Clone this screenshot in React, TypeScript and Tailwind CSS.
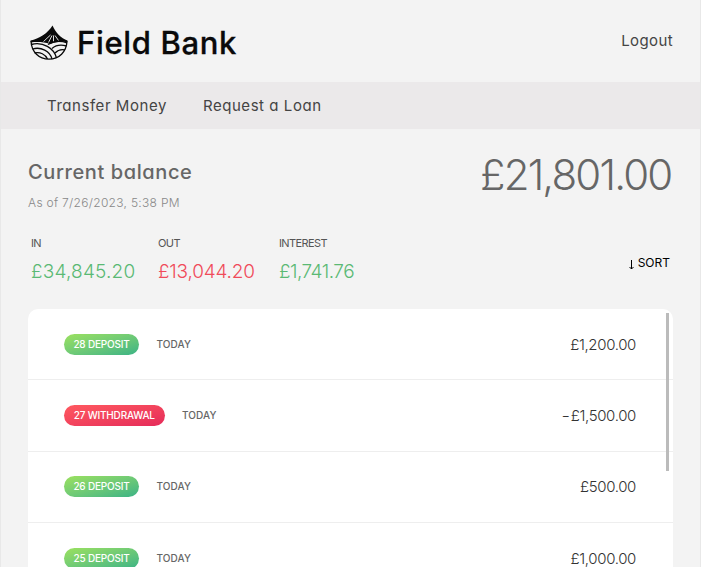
import React from "react";

type Movement = { id: number; kind: "deposit" | "withdrawal"; amount: string };

const movements: Movement[] = [
  { id: 28, kind: "deposit", amount: "£1,200.00" },
  { id: 27, kind: "withdrawal", amount: "-£1,500.00" },
  { id: 26, kind: "deposit", amount: "£500.00" },
  { id: 25, kind: "deposit", amount: "£1,000.00" },
];

function Logo() {
  return (
    <svg className="h-[36px] w-[38px] shrink-0" viewBox="0 0 38 36" fill="none" stroke="#0a0a0a">
      <path d="M0.5 15.500C9 14 18 8 22.500 0.500C26 8 31 13.500 37.500 15.500L37 17.500C31 15.500 26 17 20 19C14 17 7 16.500 1 17.500Z" fill="#0a0a0a" stroke="none" />
      <path d="M20.500 10L13.500 16.500M22 10.500L18.500 17.500M23.500 10.500L23.500 16.500M25 10.500L28.500 15.500" stroke="#f3f3f3" strokeWidth="0.9" />
      <path d="M1 16C1.500 27 9 34.200 19 34.200S36.500 27 37 16" strokeWidth="1.300" />
      <path d="M1.200 19.500C13 16.500 24 23 26.500 33M2.500 24C11 21.500 20 26 22 34M4.500 28C10 26.500 15.500 29.500 17.500 34" strokeWidth="1.300" />
      <path d="M18 19.500C23 16.500 30 15.500 37 17.800M22 23.500C26 20 31 19.500 36.500 21M25 28C28 25 31 24 35 25" strokeWidth="1.300" />
    </svg>
  );
}

function Total({ label, value, className, valueClass }: { label: string; value: string; className: string; valueClass: string }) {
  return (
    <div className={className}>
      <div className="text-[11px] leading-[14px] tracking-[-0.6px] text-[#555]">{label}</div>
      <div className={`mt-[12px] text-[19px] font-light leading-[20px] ${valueClass}`}>{value}</div>
    </div>
  );
}

function Row({ movement }: { movement: Movement }) {
  const deposit = movement.kind === "deposit";
  const negative = movement.amount.startsWith("-");
  return (
    <li className="flex h-[71.3px] shrink-0 items-center border-b border-[#eee] pl-9 pr-[37px]">
      <span
        className={`flex h-[21px] items-center justify-center rounded-full text-[10px] font-medium tracking-[-0.2px] text-white ${
          deposit ? "w-[75px] bg-linear-to-br from-[#9be15d] to-[#39b385]" : "w-[100.5px] bg-linear-to-br from-[#ff585f] to-[#e52a5a]"
        }`}
      >
        {movement.id} {deposit ? "DEPOSIT" : "WITHDRAWAL"}
      </span>
      <span className="ml-[17.5px] text-[10px] font-medium tracking-[0.1px] text-[#666]">TODAY</span>
      <span className="ml-auto pt-[2px] text-[15px] font-light tracking-[-0.35px] text-[#333]">
        {negative && <span className="mr-px inline-block origin-right scale-x-125">-</span>}
        {negative ? movement.amount.slice(1) : movement.amount}
      </span>
    </li>
  );
}

export default function App() {
  return (
    <div className="flex h-[567px] w-[701px] flex-col overflow-hidden border-x border-[#e8e8e8] bg-[#f3f3f3] font-['Inter',sans-serif] [font-feature-settings:'cv11']">
      <header className="flex h-[82px] shrink-0 items-center justify-between pl-[29px] pr-[27px]">
        <div className="flex items-center gap-[9px] pt-[4px]">
          <Logo />
          <span className="text-[31px] font-medium leading-[36px] tracking-[0.65px] text-[#0a0a0a] [-webkit-text-stroke:0.3px_#0a0a0a] [font-feature-settings:normal]">Field Bank</span>
        </div>
        <a className="pt-px text-[15px] tracking-[0.4px] text-[#444]">Logout</a>
      </header>
      <nav className="flex h-[47px] shrink-0 items-center gap-[36px] bg-[#ebe9ea] pl-[46px] pt-[2px] text-[15px] tracking-[0.55px] text-[#444]">
        <a>Transfer Money</a>
        <a>Request a Loan</a>
      </nav>
      <main className="flex min-h-0 flex-1 flex-col px-[27px]">
        <section className="flex justify-between pt-[29px]">
          <div>
            <h1 className="text-[20px] font-medium leading-[28px] tracking-[0.6px] text-[#666]">Current balance</h1>
            <p className="mt-[8px] text-[12px] font-light leading-[18px] tracking-[0.3px] text-[#888]">As of 7/26/2023, 5:38 PM</p>
          </div>
          <div className="-mt-[7px] mr-[1.5px] h-[48px] text-[42px] font-light leading-[48px] tracking-[-1.8px] text-[#666]">£21,801.00</div>
        </section>
        <section className="mt-[24px] flex h-[46px] shrink-0 pl-[3px]">
          <Total label="IN" value="£34,845.20" className="w-[127px]" valueClass="tracking-[0.2px] text-[#5ab974]" />
          <Total label="OUT" value="£13,044.20" className="w-[121px]" valueClass="tracking-[-0.2px] text-[#f04b5a]" />
          <Total label="INTEREST" value="£1,741.76" className="w-[80px]" valueClass="tracking-[-0.5px] text-[#5ab974]" />
          <button className="ml-auto mt-[18px] flex h-[18px] items-center gap-1 pr-[3px] text-[12px] text-black">
            <svg className="mt-[3px] h-[10px] w-[5px]" viewBox="0 0 5 10" fill="none" stroke="currentColor">
              <path d="M2.500 0V9M0.500 7L2.500 9L4.500 7" />
            </svg>
            SORT
          </button>
        </section>
        <section className="mt-[27px] flex min-h-0 flex-1 overflow-hidden rounded-t-[10px] bg-white">
          <ul className="flex min-w-0 flex-1 flex-col">
            {movements.map((m) => (
              <Row key={m.id} movement={m} />
            ))}
          </ul>
          <div className="-ml-[7px] mr-[4px] mt-[4px] h-[158px] w-[3px] bg-[#bbb]" />
        </section>
      </main>
    </div>
  );
}
